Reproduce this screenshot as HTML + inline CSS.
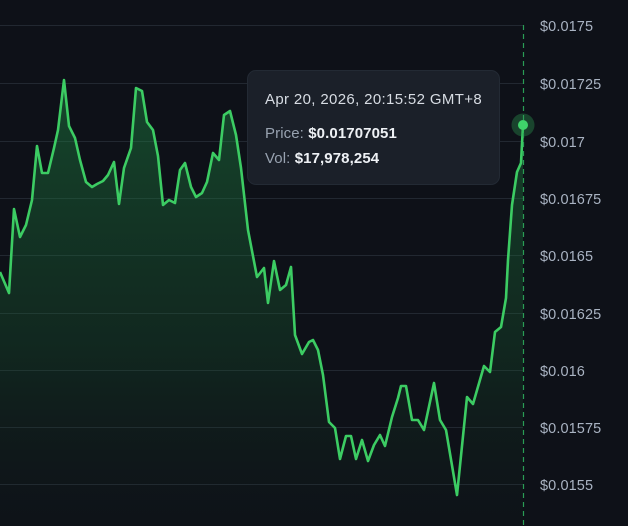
<!DOCTYPE html>
<html><head><meta charset="utf-8"><style>
html,body{margin:0;padding:0;background:#0e1118;}
body{width:628px;height:526px;position:relative;overflow:hidden;font-family:"Liberation Sans",sans-serif;}
.lbl{position:absolute;left:540px;color:#a9b3c2;font-size:14.5px;line-height:16px;letter-spacing:0.1px;}
.tip{position:absolute;left:247px;top:70px;width:253px;height:115px;background:#1b2029;border-radius:9px;border:1px solid #232a34;box-sizing:border-box;}
.tip .d{position:absolute;left:17px;top:20px;color:#d7dce3;font-size:15px;letter-spacing:0.35px;white-space:nowrap;}
.tip .p{position:absolute;left:17px;top:54px;color:#98a2b0;font-size:15px;letter-spacing:0.1px;white-space:nowrap;}
.tip .v{position:absolute;left:17px;top:79px;color:#98a2b0;font-size:15px;letter-spacing:0.1px;white-space:nowrap;}
.tip b{color:#eef1f5;}
</style></head><body>
<svg width="628" height="526" style="position:absolute;left:0;top:0">
<defs><linearGradient id="g" x1="0" y1="0" x2="0" y2="1">
<stop offset="0" stop-color="#1f8a45" stop-opacity="0.45"/>
<stop offset="0.6" stop-color="#1a6a35" stop-opacity="0.25"/>
<stop offset="1" stop-color="#14301f" stop-opacity="0.05"/></linearGradient></defs>
<g stroke="#222831" stroke-width="1">
<line x1="0" y1="25.5" x2="523" y2="25.5"/><line x1="0" y1="83.5" x2="523" y2="83.5"/>
<line x1="0" y1="141.5" x2="523" y2="141.5"/><line x1="0" y1="198.5" x2="523" y2="198.5"/>
<line x1="0" y1="255.5" x2="523" y2="255.5"/><line x1="0" y1="313.5" x2="523" y2="313.5"/>
<line x1="0" y1="370.5" x2="523" y2="370.5"/><line x1="0" y1="427.5" x2="523" y2="427.5"/>
<line x1="0" y1="484.5" x2="523" y2="484.5"/></g>
<path fill="url(#g)" stroke="none" d="M0,272 L9,293 L14,209 L20,237 L26,225 L32,200 L37,146 L42,173 L48,173 L54,148 L58,130 L64,80 L69,126 L75,138 L80,160 L86,182 L92,187 L97,184 L103,181 L108,175 L114,162 L119,204 L124,168 L131,148 L136,88 L142,91 L147,122 L153,130 L158,156 L163,205 L169,200 L175,203 L180,170 L185,163 L191,187 L196,197 L202,193 L207,182 L213,153 L219,160 L224,115 L230,111 L236,135 L241,168 L248,230 L257,277 L264,268 L268,303 L274,261 L280,290 L286,285 L291,267 L295,335 L302,354 L309,342 L313,340 L318,350 L323,375 L329,422 L335,428 L340,459 L346,436 L351,436 L356,459 L362,440 L368,461 L374,445 L380,435 L385,446 L392,417 L398,398 L401,386 L406,386 L412,420 L418,420 L424,430 L434,383 L440,420 L446,430 L457,495 L467,397 L473,404 L484,366 L490,372 L495,332 L501,327 L506,298 L508,260 L512,205 L517,172 L521,163 L523,125 L523,526 L0,526 Z"/>
<polyline fill="none" stroke="#3ccc63" stroke-width="2.6" stroke-linejoin="round" points="0,272 9,293 14,209 20,237 26,225 32,200 37,146 42,173 48,173 54,148 58,130 64,80 69,126 75,138 80,160 86,182 92,187 97,184 103,181 108,175 114,162 119,204 124,168 131,148 136,88 142,91 147,122 153,130 158,156 163,205 169,200 175,203 180,170 185,163 191,187 196,197 202,193 207,182 213,153 219,160 224,115 230,111 236,135 241,168 248,230 257,277 264,268 268,303 274,261 280,290 286,285 291,267 295,335 302,354 309,342 313,340 318,350 323,375 329,422 335,428 340,459 346,436 351,436 356,459 362,440 368,461 374,445 380,435 385,446 392,417 398,398 401,386 406,386 412,420 418,420 424,430 434,383 440,420 446,430 457,495 467,397 473,404 484,366 490,372 495,332 501,327 506,298 508,260 512,205 517,172 521,163 523,125"/>
<line x1="523.5" y1="25" x2="523.5" y2="526" stroke="#2a9d55" stroke-width="1.2" stroke-dasharray="5,4"/>
<circle cx="523" cy="125" r="11.5" fill="#2fa355" fill-opacity="0.35"/>
<circle cx="523" cy="125" r="5" fill="#3fd36a"/>
</svg>
<div class="lbl" style="top:19px">$0.0175</div>
<div class="lbl" style="top:77px">$0.01725</div>
<div class="lbl" style="top:135px">$0.017</div>
<div class="lbl" style="top:192px">$0.01675</div>
<div class="lbl" style="top:249px">$0.0165</div>
<div class="lbl" style="top:307px">$0.01625</div>
<div class="lbl" style="top:364px">$0.016</div>
<div class="lbl" style="top:421px">$0.01575</div>
<div class="lbl" style="top:478px">$0.0155</div>
<div class="tip">
<div class="d">Apr 20, 2026, 20:15:52 GMT+8</div>
<div class="p">Price: <b>$0.01707051</b></div>
<div class="v">Vol: <b>$17,978,254</b></div>
</div>
</body></html>
